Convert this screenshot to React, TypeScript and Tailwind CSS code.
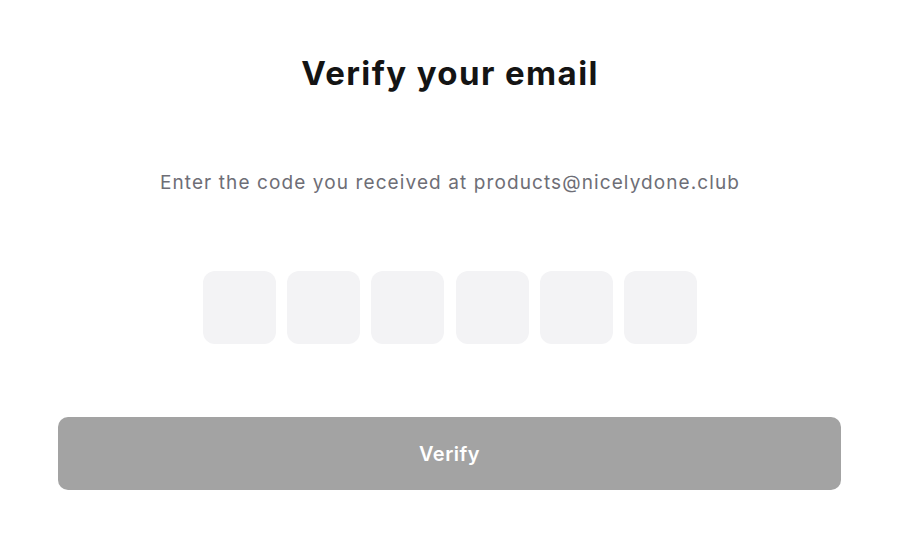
export default function App() {
  return (
    <div className="w-[900px] h-[549px] bg-white flex flex-col items-center" style={{ fontFamily: "Inter, 'Liberation Sans', sans-serif" }}>
      <h1 className="mt-[53px] text-[33px] leading-[40px] font-bold text-[#141414] tracking-[1.4px]">Verify your email</h1>
      <p className="mt-[76px] text-[19px] leading-[28px] text-[#6e6e76] tracking-[1.1px]">Enter the code you received at products@nicelydone.club</p>
      <div className="mt-[74px] flex gap-[11.2px]">
        {[0, 1, 2, 3, 4, 5].map((i) => (
          <div key={i} className="w-[73px] h-[73px] rounded-[12px] bg-[#f3f3f5]" />
        ))}
      </div>
      <div className="mt-[73px] w-full pl-[58px] pr-[59px]">
        <button className="w-full h-[73px] rounded-[10px] bg-[#a3a3a3] text-white text-[20px] font-semibold tracking-[0.5px]">Verify</button>
      </div>
    </div>
  );
}
